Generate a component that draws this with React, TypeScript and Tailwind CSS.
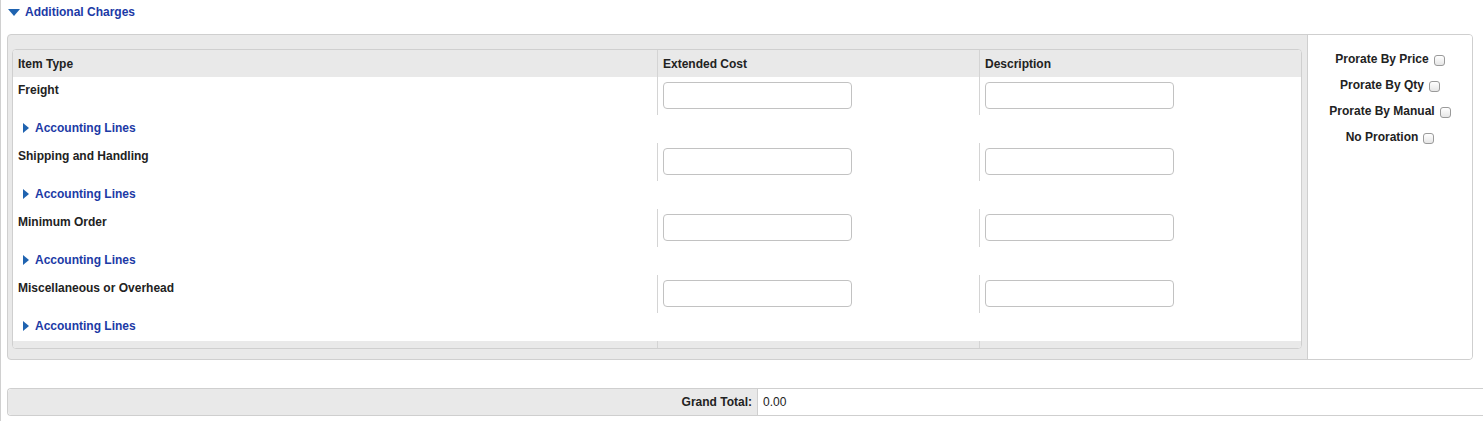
import React from "react"

// ── Data ──────────────────────────────────────────────────────────────────

const ITEMS = ["Freight", "Shipping and Handling", "Minimum Order", "Miscellaneous or Overhead"]
const PRORATE = ["Prorate By Price", "Prorate By Qty", "Prorate By Manual", "No Proration"]

// ── Bits ──────────────────────────────────────────────────────────────────

function TriangleRight() {
  return (
    <svg width="6" height="10" viewBox="0 0 6 10" className="shrink-0" aria-hidden="true">
      <path d="M0 0 L6 5 L0 10 Z" fill="#1f63b0" />
    </svg>
  )
}

function TriangleDown() {
  return (
    <svg width="12" height="7" viewBox="0 0 12 7" className="shrink-0" aria-hidden="true">
      <path d="M0 0 L12 0 L6 7 Z" fill="#1f63b0" />
    </svg>
  )
}

function Box() {
  return (
    <input
      type="checkbox"
      className="h-[11px] w-[11px] appearance-none rounded-[3px] border border-[#9a9a9a] bg-gradient-to-b from-white to-[#e6e6e6]"
    />
  )
}

function TextField() {
  return <input type="text" className="h-[27px] w-[189px] rounded-[4px] border border-[#c2c2c2] bg-white" />
}

// ── Row ───────────────────────────────────────────────────────────────────

function ChargeRow({ name }: { name: string }) {
  return (
    <div>
      <div className="grid h-[38px] grid-cols-[644px_322px_1fr]">
        <div className="pl-[5px] pt-[6px] font-bold">{name}</div>
        <div className="border-l border-[#d4d4d4] pl-[5px] pt-[5px]"><TextField /></div>
        <div className="border-l border-[#d4d4d4] pl-[5px] pt-[5px]"><TextField /></div>
      </div>
      <div className="flex h-[28px] items-center gap-[6px] pb-[2px] pl-[10px]">
        <TriangleRight />
        <span className="font-bold text-[#1c3aa6]">Accounting Lines</span>
      </div>
    </div>
  )
}

// ── Page ──────────────────────────────────────────────────────────────────

export default function App() {
  return (
    <div className="h-[421px] overflow-hidden border-l border-[#d0d0d0] bg-white font-['Liberation_Sans',Arial,sans-serif] text-[12px] leading-[14px] text-[#222]">
      {/* Section header */}
      <div className="flex h-[24px] items-center gap-[5px] pl-[7px]">
        <TriangleDown />
        <span className="font-bold text-[#1c3aa6]">Additional Charges</span>
      </div>

      {/* Charges panel */}
      <div className="ml-[6px] mr-[10px] mt-[10px] flex h-[326px] overflow-hidden rounded-[4px] border border-[#cfcfcf] bg-[#e9e9e9]">
        <div className="flex-1 pl-[4px] pr-[5px] pt-[14px]">
          <div className="overflow-hidden rounded-[4px] border border-[#cfcfcf] bg-white">
            <div className="grid h-[27px] grid-cols-[644px_322px_1fr] bg-[#e9e9e9] font-bold">
              <div className="pl-[5px] pt-[7px]">Item Type</div>
              <div className="border-l border-[#d4d4d4] pl-[5px] pt-[7px]">Extended Cost</div>
              <div className="border-l border-[#d4d4d4] pl-[5px] pt-[7px]">Description</div>
            </div>
            {ITEMS.map((name) => (
              <ChargeRow key={name} name={name} />
            ))}
            <div className="grid h-[7px] grid-cols-[644px_322px_1fr] bg-[#e9e9e9]">
              <div />
              <div className="border-l border-[#d4d4d4]" />
              <div className="border-l border-[#d4d4d4]" />
            </div>
          </div>
        </div>

        {/* Proration options */}
        <div className="flex w-[165px] flex-col items-center border-l border-[#cfcfcf] bg-white pt-[17px] font-bold">
          {PRORATE.map((label) => (
            <label key={label} className="flex h-[26px] items-start gap-[5px]">
              <span>{label}</span>
              <span className="pt-[3px]"><Box /></span>
            </label>
          ))}
        </div>
      </div>

      {/* Grand total */}
      <div className="ml-[6px] mt-[28px] flex h-[28px] rounded-l-[4px] border border-r-0 border-[#cfcfcf]">
        <div className="flex w-[750px] items-center justify-end rounded-l-[4px] border-r border-[#cfcfcf] bg-[#e9e9e9] pr-[5px] font-bold">
          Grand Total:
        </div>
        <div className="flex flex-1 items-center pl-[5px]">0.00</div>
      </div>
    </div>
  )
}
